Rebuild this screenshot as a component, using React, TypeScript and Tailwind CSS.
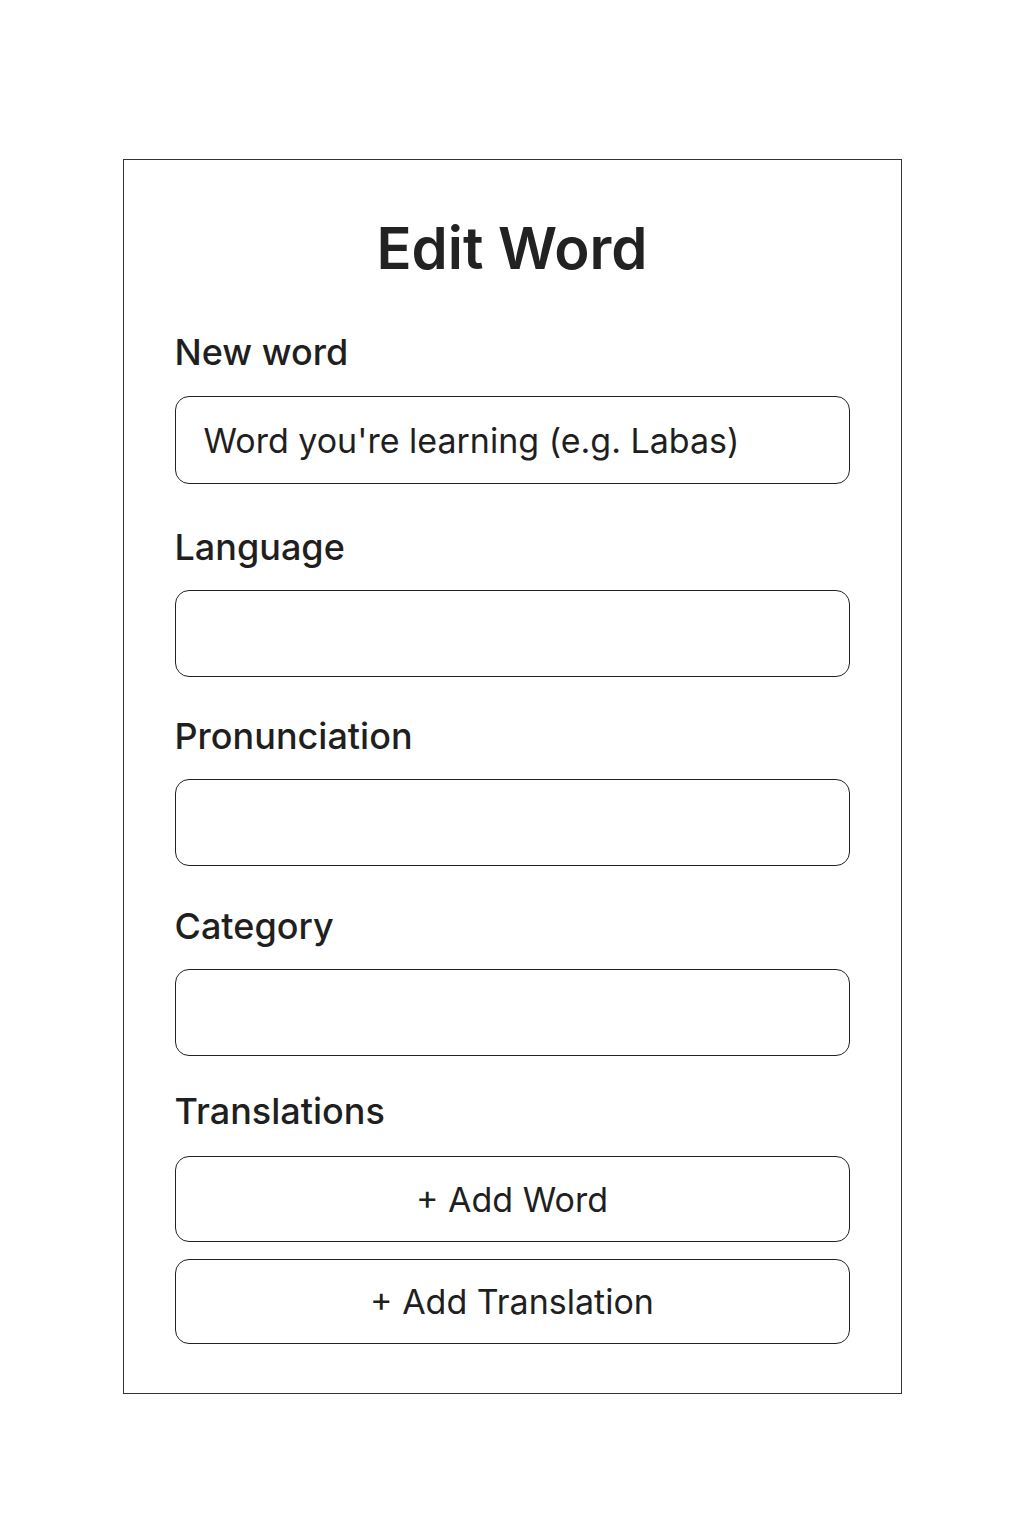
export default function App() {
	// top margin per field, tuned to the reference spacing
	const fields = [
		{ label: "Language", mt: "mt-[42px]" },
		{ label: "Pronunciation", mt: "mt-[38px]" },
		{ label: "Category", mt: "mt-[39px]" },
	];

	return (
		<div className="min-h-[1536px] w-full bg-white pt-[159px] font-['Inter',sans-serif] text-[#1f1f1f]">
			{/* Card */}
			<div className="mx-auto flex w-[779px] flex-col border border-[#333] px-[51px] pb-[49px] pt-[54px]">
				<h1 className="text-center text-[58px] font-semibold leading-[68px] text-[#222]">
					Edit Word
				</h1>

				<div className="mt-[49px] flex flex-col">
					<label className="text-[36px] font-medium leading-[42px]">New word</label>
					<input
						readOnly
						placeholder="Word you're learning (e.g. Labas)"
						className="mt-[23px] h-[88px] w-full rounded-[14px] border-[1.5px] border-[#222] px-[28px] text-[34px] outline-none placeholder:text-[#1f1f1f]"
					/>
				</div>

				{fields.map((f) => (
					<div key={f.label} className={`${f.mt} flex flex-col`}>
						<label className="text-[36px] font-medium leading-[42px]">{f.label}</label>
						<input
							readOnly
							className="mt-[22px] h-[87px] w-full rounded-[14px] border-[1.5px] border-[#222] px-[28px] text-[34px] outline-none"
						/>
					</div>
				))}

				<div className="mt-[34px] flex flex-col">
					<span className="text-[36px] font-medium leading-[42px]">Translations</span>
					<button className="mt-[24px] h-[86px] w-full rounded-[14px] border-[1.5px] border-[#222] text-[34px]">
						+ Add Word
					</button>
					<button className="mt-[17px] h-[85px] w-full rounded-[14px] border-[1.5px] border-[#222] text-[34px]">
						+ Add Translation
					</button>
				</div>
			</div>
		</div>
	);
}
